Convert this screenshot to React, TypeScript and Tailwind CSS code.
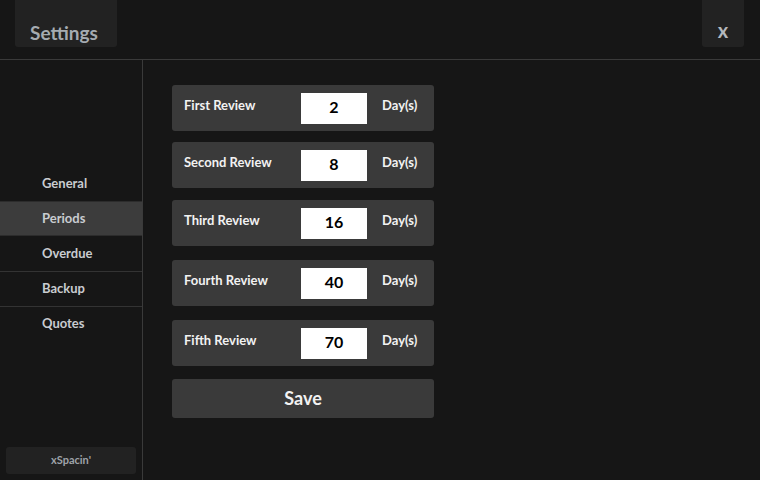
import React from "react";

const rows = [
  { label: "First Review", value: "2", mt: "mt-[25px]" },
  { label: "Second Review", value: "8", mt: "mt-[11px]" },
  { label: "Third Review", value: "16", mt: "mt-[12px]" },
  { label: "Fourth Review", value: "40", mt: "mt-[14px]" },
  { label: "Fifth Review", value: "70", mt: "mt-[14px]" },
];

export default function App() {
  return (
    <div
      className="w-[760px] h-[480px] bg-[#161616] flex flex-col overflow-hidden"
      style={{ fontFamily: "Lato, 'Open Sans', sans-serif" }}
    >
      <div className="h-[60px] border-b border-[#3a3a3a] flex justify-between shrink-0">
        <div className="ml-[15px] w-[102px] h-[47px] bg-[#222222] rounded-b-[3px] flex items-end pb-[5px] pl-[15px]">
          <span className="text-[19px] font-bold text-[#a5abb1] leading-none">Settings</span>
        </div>
        <div className="mr-[16px] w-[42px] h-[47px] bg-[#222222] rounded-b-[3px] flex items-end justify-center pb-[7px]">
          <span className="text-[20px] font-bold text-[#b4b8bd] leading-none">x</span>
        </div>
      </div>
      <div className="flex flex-1">
        <div className="w-[143px] border-r border-[#3a3a3a] flex flex-col">
          <div className="h-[106px]" />
          <div className="h-[35px] flex items-center pl-[42px] text-[13px] font-bold text-[#c9ccd0]">General</div>
          <div className="h-[35px] flex items-center pl-[42px] text-[13px] font-bold text-[#c9ccd0] bg-[#3c3c3c] border-y border-[#2c2c2c]">Periods</div>
          <div className="h-[35px] flex items-center pl-[42px] text-[13px] font-bold text-[#c9ccd0]">Overdue</div>
          <div className="h-[35px] flex items-center pl-[42px] text-[13px] font-bold text-[#c9ccd0] border-t border-[#333333]">Backup</div>
          <div className="h-[35px] flex items-center pl-[42px] text-[13px] font-bold text-[#c9ccd0] border-t border-[#333333]">Quotes</div>
          <div className="flex-1" />
          <div className="mx-[6px] mb-[6px] h-[27px] bg-[#222222] rounded-[3px] flex items-center justify-center text-[11px] font-bold text-[#9ea3a9]">
            xSpacin'
          </div>
        </div>
        <div className="flex flex-col pl-[29px]">
          {rows.map((r) => (
            <div
              key={r.label}
              className={`${r.mt} w-[262px] h-[46px] bg-[#3a3a3a] rounded-[3px] flex items-center`}
            >
              <span className="w-[129px] pl-[12px] pb-[4px] text-[13px] font-bold text-[#f2f2f2]">{r.label}</span>
              <div className="w-[66px] h-[31px] bg-white flex items-center justify-center pb-[3px] text-[16px] font-bold text-black">
                {r.value}
              </div>
              <span className="ml-[15px] pb-[4px] text-[13px] font-bold text-[#f2f2f2]">Day(s)</span>
            </div>
          ))}
          <div className="mt-[13px] w-[262px] h-[39px] bg-[#3a3a3a] rounded-[3px] flex items-center justify-center text-[18px] font-bold text-[#f2f2f2]">
            Save
          </div>
        </div>
      </div>
    </div>
  );
}
